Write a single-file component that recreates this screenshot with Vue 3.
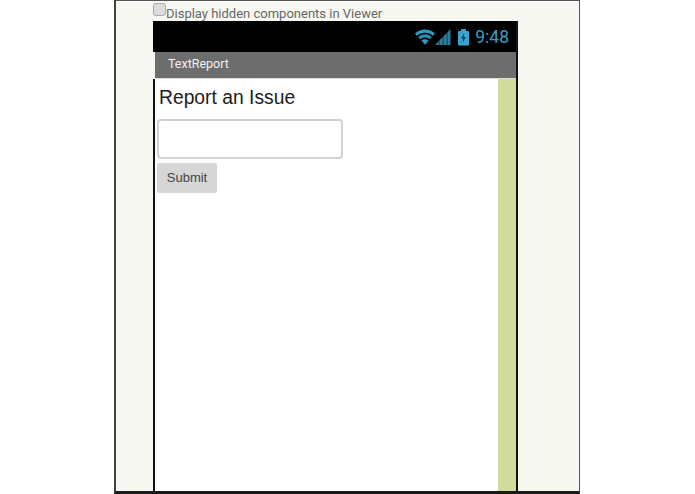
<script setup>
const title = "TextReport";
</script>

<template>
  <div class="page">
    <div class="panel">
      <label class="hidden-toggle">
        <span class="checkbox"></span>
        <span>Display hidden components in Viewer</span>
      </label>

      <div class="phone">
        <div class="status-bar">
          <svg class="status-icons" width="54" height="18" viewBox="0 0 54 18">
            <path d="M0 5.500C5.500 .2 14.500 .2 20 5.500L18 7.800C13.500 3.600 6.500 3.600 2 7.800Z" fill="#2f9ac5" />
            <path d="M3.200 9C7.200 5.400 12.800 5.400 16.800 9L14.800 11.300C11.900 8.900 8.100 8.900 5.200 11.300Z" fill="#2a8db6" />
            <path d="M6.400 12.400C8.500 10.700 11.500 10.700 13.600 12.400L10 16.800Z" fill="#2f9ac5" />
            <path d="M20 17H23.800V13L20 17ZM24.300 17H27.800V9L24.300 12.500ZM28.300 17H31.800V5L28.300 8.500ZM32.300 17H35.500V1L32.300 4.500Z" fill="#2a7f9f" />
            <rect x="43" y="3" width="11" height="14.500" rx="1" fill="#3aa3cd" />
            <rect x="46" y="1" width="5" height="2" fill="#3aa3cd" />
            <path d="M49.300 5L46.300 10.500H48.300L47.500 15L50.700 9H48.700Z" fill="#0d3443" />
          </svg>
          <span class="clock">9:48</span>
        </div>

        <div class="title-bar">{{ title }}</div>

        <div class="screen">
          <div class="content">
            <div class="heading">Report an Issue</div>
            <div class="text-box"></div>
            <button class="submit" type="button">Submit</button>
          </div>
          <div class="side-strip"></div>
        </div>
      </div>
    </div>
  </div>
</template>

<style>
html,
body {
  margin: 0;
  background: #fff;
}
</style>

<style scoped>
.page {
  width: 695px;
  height: 494px;
  overflow: hidden;
  padding-left: 114px;
  box-sizing: border-box;
  font-family: "Liberation Sans", Arial, sans-serif;
}

.panel {
  width: 466px;
  height: 494px;
  box-sizing: border-box;
  background: #f7f8f2;
  border-left: 2px solid #3f3f3f;
  border-right: 1px solid #555;
  border-top: 1px solid #555;
  border-bottom: 3px solid #1a1a1a;
  padding-left: 37px;
  overflow: hidden;
}

.hidden-toggle {
  display: flex;
  align-items: flex-end;
  height: 20px;
  font-family: Roboto, sans-serif;
  font-size: 13px;
  color: #666;
  white-space: nowrap;
}

.checkbox {
  width: 11px;
  height: 11px;
  margin-bottom: 5px;
  background: #dcdcdc;
  border: 1px solid #aaa;
  border-radius: 3px;
  flex: none;
}

.phone {
  width: 365px;
  height: 470px;
  box-sizing: border-box;
  border-right: 2px solid #111;
  display: flex;
  flex-direction: column;
}

.status-bar {
  height: 31px;
  background: #000;
  display: flex;
  align-items: center;
  justify-content: flex-end;
  padding-right: 7px;
  flex: none;
}

.status-icons {
  margin-right: 6px;
}

.clock {
  font-family: Roboto, sans-serif;
  font-size: 17.500px;
  color: #3a9dc4;
}

.title-bar {
  height: 27px;
  box-sizing: border-box;
  margin-left: 2px;
  padding-left: 13px;
  background: #6d6d6d;
  color: #f2f2f2;
  font-family: Roboto, sans-serif;
  font-size: 12.500px;
  line-height: 24px;
  border-bottom: 1px solid #ddd;
  flex: none;
}

.screen {
  flex: 1;
  display: flex;
  background: #fff;
  border-left: 2px solid #111;
}

.content {
  flex: 1;
  padding: 0 2px;
}

.heading {
  font-size: 19.300px;
  line-height: 24px;
  color: #1c1c1c;
  margin: 7px 0 0 2px;
}

.text-box {
  width: 186px;
  height: 40px;
  box-sizing: border-box;
  margin-top: 9px;
  background: #fff;
  border: 2px solid #d2d2d2;
  border-radius: 4px;
}

.submit {
  display: block;
  width: 60px;
  height: 30px;
  margin-top: 4px;
  padding: 0 0 2px;
  background: #d6d6d6;
  border: none;
  border-radius: 2px;
  color: #444;
  font-family: "Liberation Sans", Arial, sans-serif;
  font-size: 13px;
}

.side-strip {
  width: 18px;
  background: #d0dc9e;
  flex: none;
}
</style>
